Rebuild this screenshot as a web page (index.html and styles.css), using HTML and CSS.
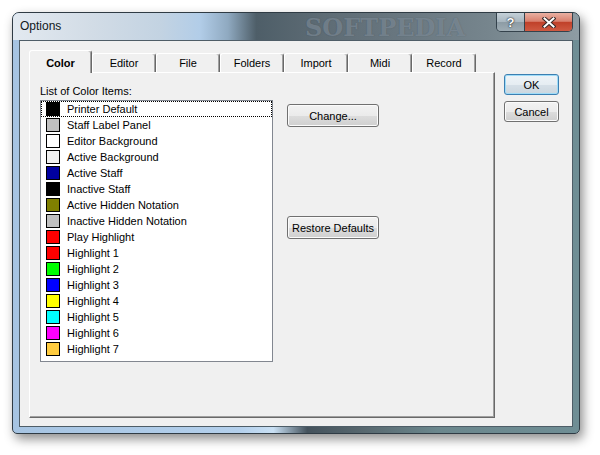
FILE: index.html
```html
<!DOCTYPE html>
<html lang="en">
<head>
  <meta charset="UTF-8">
  <title>Options</title>
  <link rel="stylesheet" href="styles.css">
</head>
<body>

<div class="window">
  <!-- title bar -->
  <div class="titlebar">
    <span class="title">Options</span>
    <span class="watermark">SOFTPEDIA</span>
    <div class="caption-btns">
      <div class="cap-btn help">?</div>
      <div class="cap-btn close">
        <svg width="14" height="11" viewBox="0 0 14 11">
          <path d="M2.5 1.5 L11.5 9.5 M11.5 1.5 L2.5 9.5" stroke="#3a2a28" stroke-width="4" stroke-linecap="square"/>
          <path d="M2.5 1.5 L11.5 9.5 M11.5 1.5 L2.5 9.5" stroke="#ffffff" stroke-width="2" stroke-linecap="square"/>
        </svg>
      </div>
    </div>
  </div>

  <!-- client area -->
  <div class="client">
    <div class="left-col">
      <div class="tabs">
        <div class="tab active">Color</div>
        <div class="tab">Editor</div>
        <div class="tab">File</div>
        <div class="tab">Folders</div>
        <div class="tab">Import</div>
        <div class="tab">Midi</div>
        <div class="tab">Record</div>
      </div>
      <div class="panel">
        <div class="list-col">
          <div class="label">List of Color Items:</div>
          <div class="listbox">
            <div class="item focused"><span class="swatch sw-black"></span>Printer Default</div>
            <div class="item"><span class="swatch sw-silver"></span>Staff Label Panel</div>
            <div class="item"><span class="swatch sw-white"></span>Editor Background</div>
            <div class="item"><span class="swatch sw-light"></span>Active Background</div>
            <div class="item"><span class="swatch sw-navy"></span>Active Staff</div>
            <div class="item"><span class="swatch sw-black"></span>Inactive Staff</div>
            <div class="item"><span class="swatch sw-olive"></span>Active Hidden Notation</div>
            <div class="item"><span class="swatch sw-silver"></span>Inactive Hidden Notation</div>
            <div class="item"><span class="swatch sw-red"></span>Play Highlight</div>
            <div class="item"><span class="swatch sw-red"></span>Highlight 1</div>
            <div class="item"><span class="swatch sw-lime"></span>Highlight 2</div>
            <div class="item"><span class="swatch sw-blue"></span>Highlight 3</div>
            <div class="item"><span class="swatch sw-yellow"></span>Highlight 4</div>
            <div class="item"><span class="swatch sw-cyan"></span>Highlight 5</div>
            <div class="item"><span class="swatch sw-magenta"></span>Highlight 6</div>
            <div class="item"><span class="swatch sw-gold"></span>Highlight 7</div>
          </div>
        </div>
        <div class="action-col">
          <button class="btn btn-wide">Change...</button>
          <button class="btn btn-wide btn-restore">Restore Defaults</button>
        </div>
      </div>
    </div>

    <div class="right-col">
      <button class="btn btn-small btn-default">OK</button>
      <button class="btn btn-small">Cancel</button>
    </div>
  </div>
</div>

</body>
</html>
```

FILE: styles.css
```css
body {
  margin: 0;
  padding: 12px 0 0 12px;
  width: 600px;
  height: 455px;
  box-sizing: border-box;
  background: #ffffff;
  overflow: hidden;
  font-family: "Liberation Sans", Arial, sans-serif;
  font-size: 11px;
  color: #000;
}

/* window frame */
.window {
  width: 568px;
  height: 422px;
  box-sizing: border-box;
  border: 1px solid #2f3b44;
  border-radius: 7px 7px 5px 5px;
  padding: 0 6px 6px 6px;
  display: flex;
  flex-direction: column;
  background: linear-gradient(90deg, #a6c4e2 0%, #b4d0ec 40%, #c9e0f4 46%, #44525c 52%, #58686f 62%, #6b878d 75%, #6f8e95 100%);
  box-shadow: 3px 5px 11px rgba(0, 0, 0, 0.45);
}

.titlebar {
  height: 27px;
  display: flex;
  align-items: flex-start;
  position: relative;
  margin: 0 -6px;
  padding: 0 6px;
  border-radius: 6px 6px 0 0;
  background: linear-gradient(90deg, #e2e9f0 0%, #d2dce6 14%, #c3d3e2 26%, #b2cde8 33%, #8fa9c0 38%, #4e5e68 43%, #5e6c75 55%, #6a7881 70%, #76858d 84%, #8e9ca3 100%);
}

.title {
  font-family: "Liberation Sans", Arial, sans-serif;
  font-size: 12px;
  line-height: 27px;
  padding-left: 1px;
  color: #101820;
}

.watermark {
  position: absolute;
  left: 292px;
  top: 0;
  font-family: "DejaVu Serif", serif;
  font-weight: bold;
  font-size: 24px;
  color: rgba(150, 165, 178, 0.5);
  text-shadow: 0 0 1px rgba(40, 50, 60, 0.4);
  pointer-events: none;
}

.caption-btns {
  margin-left: auto;
  display: flex;
  height: 19px;
  box-sizing: border-box;
  border: 1px solid #34424c;
  border-top: none;
  border-radius: 0 0 5px 5px;
  overflow: hidden;
  position: relative;
}

.cap-btn {
  height: 100%;
  display: flex;
  align-items: center;
  justify-content: center;
}

.help {
  width: 27px;
  border-right: 1px solid #34424c;
  background: linear-gradient(#c4d0d8 0%, #a9b7c0 48%, #8d9ca5 52%, #9eacb4 100%);
  color: #fff;
  font-family: "Liberation Sans", Arial, sans-serif;
  font-weight: bold;
  font-size: 13px;
  text-shadow: 0 0 2px #1a2228, 0 0 1px #1a2228;
}

.close {
  width: 47px;
  background: linear-gradient(#e9b0a2 0%, #d9806e 46%, #c0412a 52%, #cf5a42 100%);
}

/* client area */
.client {
  flex: 1;
  display: flex;
  border: 1px solid #4e5d67;
  background: #f0f0f0;
  padding: 9px 0 0 9px;
}

.left-col {
  display: flex;
  flex-direction: column;
  width: 466px;
}

.tabs {
  display: flex;
  align-items: flex-end;
  height: 22px;
  position: relative;
  z-index: 1;
}

.tab {
  width: 64px;
  height: 19px;
  box-sizing: border-box;
  border: 1px solid #ffffff;
  border-right-color: #696969;
  border-bottom: none;
  border-radius: 3px 3px 0 0;
  box-shadow: inset -1px 0 #a0a0a0;
  background: #f0f0f0;
  text-align: center;
  line-height: 19px;
}

.tab.active {
  width: 63px;
  height: 23px;
  margin-bottom: -1px;
  font-weight: bold;
  line-height: 22px;
  padding-top: 1px;
}

.panel {
  height: 346px;
  box-sizing: border-box;
  border: 1px solid #ffffff;
  border-right-color: #696969;
  border-bottom-color: #696969;
  box-shadow: inset -1px -1px #a0a0a0;
  display: flex;
  padding: 11px 0 0 10px;
}

.label {
  line-height: 14px;
  height: 14px;
  margin-bottom: 2px;
}

.listbox {
  width: 233px;
  height: 262px;
  box-sizing: border-box;
  border: 1px solid #828790;
  background: #ffffff;
}

.item {
  height: 16px;
  display: flex;
  align-items: center;
  padding-left: 5px;
  box-sizing: border-box;
  white-space: nowrap;
}

.item.focused {
  outline: 1px dotted #000;
  outline-offset: -1px;
}

.swatch {
  width: 14px;
  height: 14px;
  box-sizing: border-box;
  border: 1px solid #000;
  margin-right: 7px;
  flex: none;
}

.sw-black { background: #000000; }
.sw-silver { background: #c0c0c0; }
.sw-white { background: #ffffff; }
.sw-light { background: #f0f0f0; }
.sw-navy { background: #0000a0; }
.sw-olive { background: #808000; }
.sw-red { background: #ff0000; }
.sw-lime { background: #00ff00; }
.sw-blue { background: #0000ff; }
.sw-yellow { background: #ffff00; }
.sw-cyan { background: #00ffff; }
.sw-magenta { background: #ff00ff; }
.sw-gold { background: #ffcc40; }

.action-col {
  display: flex;
  flex-direction: column;
  margin-left: 14px;
  padding-top: 20px;
}

/* buttons */
.btn {
  font-family: inherit;
  font-size: 11px;
  color: #000;
  padding: 0;
  box-sizing: border-box;
  border: 1px solid #707070;
  border-radius: 3px;
  background: linear-gradient(#f2f2f2 0%, #ebebeb 50%, #dddddd 51%, #cfcfcf 100%);
  box-shadow: inset 0 0 0 1px #fbfbfb;
}

.btn-wide {
  width: 92px;
  height: 23px;
}

.btn-restore {
  margin-top: 89px;
}

.right-col {
  display: flex;
  flex-direction: column;
  gap: 6px;
  margin-left: 9px;
  padding-top: 24px;
}

.btn-small {
  width: 55px;
  height: 21px;
}

.btn-default {
  border-color: #3c7fb1;
  box-shadow: inset 0 0 0 1px #9fdcf8;
  background: linear-gradient(#eef4f8 0%, #e6edf2 50%, #d6e0e8 51%, #cbd6de 100%);
}
```
